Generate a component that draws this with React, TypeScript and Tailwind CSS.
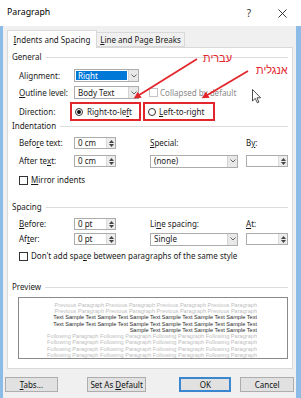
import React from 'react';

const U = ({ children }: { children: React.ReactNode }) => (
  <span className="underline underline-offset-[1px] decoration-[0.5px]">{children}</span>
);

const Chevron = () => (
  <svg width="6" height="4" viewBox="0 0 6 4">
    <path d="M0.5 0.5 L3 3 L5.5 0.5" fill="none" stroke="#555" strokeWidth="0.9" />
  </svg>
);

const Select = ({ value, w, active = false }: { value: string; w: string; active?: boolean }) => (
  <div className={`flex h-[13px] border border-[#acacac] bg-white ${w}`}>
    <div className="flex flex-1 p-[1px]">
      <span className={`flex flex-1 items-center px-[2px] leading-none ${active ? 'bg-[#0078d7] text-white' : ''}`}>{value}</span>
    </div>
    <div className="flex w-[10px] items-center justify-center border-l border-[#d4d4d4] bg-[#e8e8e8]">
      <Chevron />
    </div>
  </div>
);

const Spin = ({ value }: { value: string }) => (
  <div className="flex h-[12px] w-[42px] border border-[#acacac] bg-white">
    <span className="flex flex-1 items-center pl-[3px] leading-none">{value}</span>
    <div className="flex w-[9px] flex-col items-center justify-center gap-[1px] border-l border-[#dcdcdc] bg-[#ececec]">
      <svg width="5" height="3" viewBox="0 0 5 3"><path d="M0 3 L2.5 0 L5 3 Z" fill="#444" /></svg>
      <svg width="5" height="3" viewBox="0 0 5 3"><path d="M0 0 L2.5 3 L5 0 Z" fill="#444" /></svg>
    </div>
  </div>
);

const Check = () => <div className="h-[9px] w-[9px] shrink-0 border border-[#333] bg-white" />;

const Group = ({ children, cls }: { children: React.ReactNode; cls: string }) => (
  <div className={`flex items-center ${cls}`}>
    <span className="leading-none">{children}</span>
    <div className="ml-[4px] h-px flex-1 bg-[#dcdcdc]" />
  </div>
);

const Radio = ({ on }: { on?: boolean }) => (
  <div className="flex h-[8px] w-[8px] shrink-0 items-center justify-center rounded-full border border-[#333] bg-white">
    {on && <div className="h-[4px] w-[4px] rounded-full bg-[#111]" />}
  </div>
);

const prev = 'Previous Paragraph ';
const samp = 'Sample Text ';
const foll = 'Following Paragraph ';
const lines: [string, string][] = [
  [prev.repeat(4).trim(), 'text-[#bdbdbd]'],
  [prev.repeat(4).trim(), 'text-[#bdbdbd]'],
  [('Text ' + samp.repeat(6)).trim(), 'text-[#2a2a2a]'],
  [('Text ' + samp.repeat(6)).trim(), 'text-[#2a2a2a]'],
  [samp.repeat(4).trim(), 'text-[#2a2a2a]'],
  [foll.repeat(4).trim(), 'text-[#bdbdbd]'],
  [foll.repeat(4).trim(), 'text-[#bdbdbd]'],
  [foll.repeat(4).trim(), 'text-[#bdbdbd]'],
  [foll.repeat(4).trim(), 'text-[#bdbdbd]'],
];

export default function App() {
  return (
    <div className="relative flex h-[398px] w-[301px] flex-col overflow-hidden bg-[#f0f0f0] font-['Noto_Sans',sans-serif] text-[8px] text-[#1a1a1a]">
      {/* title bar */}
      <div className="flex h-[26px] shrink-0 items-center bg-white pl-[7px] pr-[14px]">
        <span className="text-[8.8px] text-black">Paragraph</span>
        <span className="ml-auto text-[10px] text-[#333]">?</span>
        <svg className="ml-[27px]" width="9" height="9" viewBox="0 0 9 9">
          <path d="M0.5 0.5 L8.5 8.5 M8.5 0.5 L0.5 8.5" stroke="#222" strokeWidth="0.9" />
        </svg>
      </div>

      <div className="flex flex-1 flex-col border-l-[3px] border-r-[5px] border-[#8cbbe8] pl-[4px] pr-[3px]">
        {/* tabs */}
        <div className="mt-[4px] flex items-end">
          <div className="relative z-10 -mb-px flex h-[18px] w-[90px] items-center justify-center border border-b-0 border-[#d9d9d9] bg-white">
            <span><U>I</U>ndents and Spacing</span>
          </div>
          <div className="flex h-[15px] w-[88px] items-center justify-center border border-l-0 border-[#d9d9d9] bg-[#f0f0f0]">
            <span><U>L</U>ine and Page Breaks</span>
          </div>
        </div>

        {/* panel */}
        <div className="flex flex-col border border-[#d9d9d9] bg-white px-[4px] pb-[9px]">
          <Group cls="mt-[3px] h-[12px]">General</Group>

          <div className="mt-[6px] flex h-[13px] items-center pl-[7px]">
            <span className="w-[55px]">Alignment:</span>
            <Select value="Right" w="w-[65px]" active />
          </div>

          <div className="mt-[4px] flex h-[13px] items-center pl-[7px]">
            <span className="w-[55px]"><U>O</U>utline level:</span>
            <Select value="Body Text" w="w-[65px]" />
            <div className="ml-[10px] flex items-center gap-[2px] text-[#8a8a8a]">
              <div className="h-[9px] w-[9px] border border-[#c4c4c4] bg-white" />
              <span>Collapsed by default</span>
            </div>
          </div>

          <div className="mt-[3px] flex h-[19px] items-center pl-[7px]">
            <span className="w-[51px]">Direction:</span>
            <div className="flex h-[19px] w-[71px] items-center gap-[4px] border-2 border-[#e3262b] pl-[3px]">
              <Radio on />
              <span>Right-to-le<U>f</U>t</span>
            </div>
            <div className="ml-[2px] flex h-[19px] w-[72px] items-center gap-[3px] border-2 border-[#e3262b] pl-[3px]">
              <Radio />
              <span><U>L</U>eft-to-right</span>
            </div>
          </div>

          <Group cls="h-[10px]">Indentation</Group>

          <div className="mt-[6px] flex h-[12px] items-center pl-[7px]">
            <span className="w-[55px]">Befo<U>r</U>e text:</span>
            <Spin value="0 cm" />
            <span className="ml-[34px] w-[96px]"><U>S</U>pecial:</span>
            <span>B<U>y</U>:</span>
          </div>

          <div className="mt-[6px] flex h-[12px] items-center pl-[7px]">
            <span className="w-[55px]">After te<U>x</U>t:</span>
            <Spin value="0 cm" />
            <div className="ml-[34px]"><Select value="(none)" w="w-[88px]" /></div>
            <div className="ml-[8px]"><Spin value="" /></div>
          </div>

          <div className="mt-[8px] flex h-[10px] items-center gap-[3px] pl-[7px]">
            <Check />
            <span><U>M</U>irror indents</span>
          </div>

          <Group cls="mt-[17px] h-[10px]">Spacing</Group>

          <div className="mt-[6px] flex h-[12px] items-center pl-[7px]">
            <span className="w-[55px]"><U>B</U>efore:</span>
            <Spin value="0 pt" />
            <span className="ml-[34px] w-[96px]">Li<U>n</U>e spacing:</span>
            <span><U>A</U>t:</span>
          </div>

          <div className="mt-[3px] flex h-[12px] items-center pl-[7px]">
            <span className="w-[55px]">Af<U>t</U>er:</span>
            <Spin value="0 pt" />
            <div className="ml-[34px]"><Select value="Single" w="w-[88px]" /></div>
            <div className="ml-[8px]"><Spin value="" /></div>
          </div>

          <div className="mt-[6px] flex h-[10px] items-center gap-[3px] pl-[7px]">
            <Check />
            <span>Don't add spa<U>c</U>e between paragraphs of the same style</span>
          </div>

          <Group cls="mt-[21px] h-[10px]">Preview</Group>

          <div className="ml-[6px] mt-[5px] flex h-[62px] flex-col overflow-hidden border border-[#8a8a8a] bg-white pl-[20px] pr-[30px] pt-[4px] font-['Liberation_Sans',sans-serif] text-[5.6px] leading-[6.5px]">
            {lines.map(([t, c], i) => (
              <div key={i} dir="rtl" className={`overflow-hidden whitespace-nowrap text-right ${c}`}>{t}</div>
            ))}
          </div>
        </div>

        {/* buttons */}
        <div className="-ml-[2px] -mr-[1px] mt-[8px] flex h-[15px] text-[#111]">
          <div className="flex w-[53px] items-center justify-center border border-[#adadad] bg-[#e1e1e1]"><span><U>T</U>abs...</span></div>
          <div className="ml-[29px] flex w-[60px] items-center justify-center border border-[#adadad] bg-[#e1e1e1]"><span>Set As <U>D</U>efault</span></div>
          <div className="ml-[33px] flex w-[52px] items-center justify-center border-2 border-[#3a87d0] bg-[#e1e1e1]"><span>OK</span></div>
          <div className="ml-[9px] flex w-[54px] items-center justify-center border border-[#adadad] bg-[#e1e1e1]"><span>Cancel</span></div>
        </div>
      </div>

      {/* annotations */}
      <svg className="pointer-events-none absolute left-0 top-0" width="301" height="398" viewBox="0 0 301 398">
        <defs>
          <marker id="ah" markerWidth="4" markerHeight="4" refX="2.5" refY="2" orient="auto" markerUnits="strokeWidth">
            <path d="M0 0 L4 2 L0 4 Z" fill="#e3262b" />
          </marker>
        </defs>
        <line x1="197" y1="59" x2="136" y2="97" stroke="#e3262b" strokeWidth="1.8" markerEnd="url(#ah)" />
        <line x1="248" y1="71" x2="204" y2="97" stroke="#e3262b" strokeWidth="1.8" markerEnd="url(#ah)" />
      </svg>
      <span dir="rtl" className="absolute left-[203px] top-[53px] font-['Liberation_Sans',sans-serif] text-[11px] leading-none text-[#e3262b]">עברית</span>
      <span dir="rtl" className="absolute left-[256px] top-[65px] font-['Liberation_Sans',sans-serif] text-[11px] leading-none text-[#e3262b]">אנגלית</span>

      {/* mouse cursor */}
      <svg className="absolute left-[252px] top-[89px]" width="10" height="15" viewBox="0 0 10 15">
        <path d="M0.5 0.5 L0.5 12 L3.3 9.4 L5.3 13.8 L6.9 13.1 L5 8.8 L8.6 8.8 Z" fill="white" stroke="#222" strokeWidth="0.8" />
      </svg>
    </div>
  );
}
